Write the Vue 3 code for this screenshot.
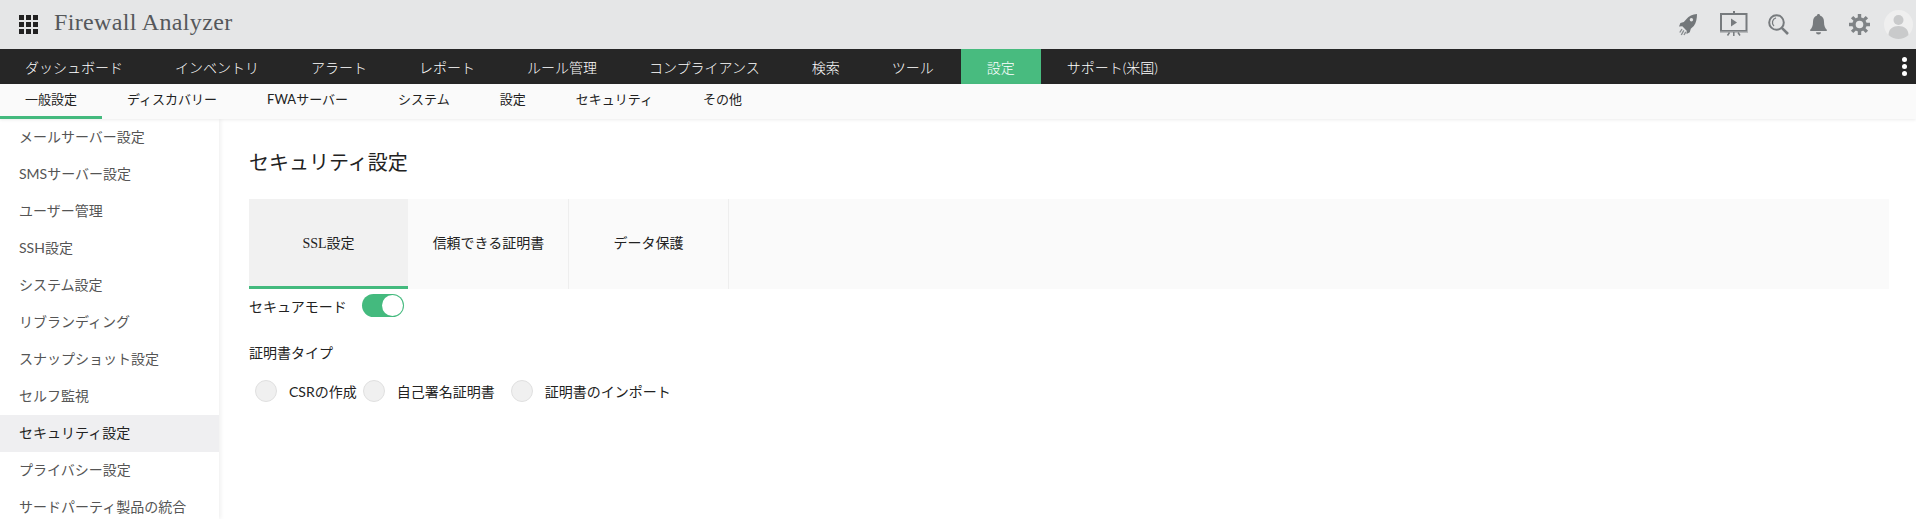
<script setup>
const navItems = ['ダッシュボード', 'インベントリ', 'アラート', 'レポート', 'ルール管理', 'コンプライアンス', '検索', 'ツール', '設定', 'サポート(米国)']
const subItems = ['一般設定', 'ディスカバリー', 'FWAサーバー', 'システム', '設定', 'セキュリティ', 'その他']
const sideItems = ['メールサーバー設定', 'SMSサーバー設定', 'ユーザー管理', 'SSH設定', 'システム設定', 'リブランディング', 'スナップショット設定', 'セルフ監視', 'セキュリティ設定', 'プライバシー設定', 'サードパーティ製品の統合']
const tabs = ['SSL設定', '信頼できる証明書', 'データ保護']
const radios = ['CSRの作成', '自己署名証明書', '証明書のインポート']
</script>

<template>
  <div class="page">
    <header class="top">
      <div class="grid-icon"><i v-for="n in 9" :key="n"></i></div>
      <div class="brand">Firewall Analyzer</div>
      <div class="tools">
        <svg class="ic-rocket" width="18" height="22" viewBox="0 0 18 22">
          <path d="M18 0c-4.500.4-8.200 2-10.500 5L4.800 8 1.400 9 0 12.500l3.300-.2 4.400 4.400-.2 3.300 3.300-1.800 1-3.400 3-2.800C17.200 9 18 4.500 18 0z" fill="#73777a"/>
          <circle cx="12.400" cy="5.800" r="1.700" fill="#e5e6e7"/>
          <path d="M3 15 .8 18.500M4.800 16.300 2.300 21M6.800 17.800 5 21" stroke="#8b8f92" stroke-width="1.400" fill="none"/>
        </svg>
        <svg class="ic-board" width="28" height="25" viewBox="0 0 28 25">
          <path d="M14 0v3" stroke="#777b7e" stroke-width="2"/>
          <rect x="1" y="3" width="25.500" height="17" fill="none" stroke="#777b7e" stroke-width="2"/>
          <path d="M11 7.500v8l6-4z" fill="#777b7e"/>
          <path d="M0 20.500h28v1.500H0z" fill="#b9bbbd"/>
          <path d="M7.500 24.500 9.500 21.500M20 24.500l-2-3M13.800 21v4" stroke="#777b7e" stroke-width="1.500"/>
        </svg>
        <svg class="ic-search" width="21" height="21" viewBox="0 0 21 21">
          <circle cx="8.500" cy="8.500" r="7.300" fill="none" stroke="#777b7e" stroke-width="2"/>
          <path d="M8 3.800a4.800 4.800 0 0 0-2 8.200" fill="none" stroke="#777b7e" stroke-width="1.300"/>
          <path d="M13.800 13.800 20 20" stroke="#777b7e" stroke-width="2.600"/>
        </svg>
        <svg class="ic-bell" width="17" height="21" viewBox="0 0 17 21">
          <path d="M8.500 0c1 0 1.500.7 1.500 1.600C13 2.400 14 5 14 8c0 4 1.200 6 2.800 7.800V17H.2v-1.200C1.800 14 3 12 3 8c0-3 1-5.600 4-6.400C7 .7 7.500 0 8.500 0z" fill="#777b7e"/>
          <path d="M6 18.300h5a2.500 2.200 0 0 1-5 0z" fill="#777b7e"/>
        </svg>
        <svg class="ic-gear" width="21" height="21" viewBox="0 0 21 21">
          <circle cx="10.500" cy="10.500" r="5.500" fill="none" stroke="#7f8386" stroke-width="3.400"/>
          <g stroke="#7f8386" stroke-width="3.400">
            <path d="M10.500 0v4M10.500 17v4M0 10.500h4M17 10.500h4M3.100 3.100l2.800 2.800M15.100 15.100l2.800 2.800M3.100 17.900l2.800-2.800M15.100 5.900l2.800-2.800"/>
          </g>
        </svg>
        <svg class="ic-avatar" width="29" height="29" viewBox="0 0 29 29">
          <circle cx="14.500" cy="14.500" r="14.500" fill="#efefef"/>
          <circle cx="14.500" cy="10" r="5" fill="#c9cacb"/>
          <path d="M4.500 25c0-6 4.500-9 10-9s10 3 10 9a14.500 14.500 0 0 1-20 0z" fill="#c9cacb"/>
        </svg>
      </div>
    </header>

    <nav class="nav">
      <a v-for="item in navItems" :key="item" class="nav-item" :class="{ active: item === '設定' }">{{ item }}</a>
      <div class="dots"><i></i><i></i><i></i></div>
    </nav>

    <nav class="subnav">
      <a v-for="(item, i) in subItems" :key="item" class="sub-item" :class="{ active: i === 0 }">{{ item }}</a>
    </nav>

    <div class="body">
      <aside class="side">
        <a v-for="item in sideItems" :key="item" class="side-item" :class="{ active: item === 'セキュリティ設定' }">{{ item }}</a>
      </aside>

      <main class="main">
        <h1 class="title">セキュリティ設定</h1>
        <div class="tabs">
          <div v-for="(t, i) in tabs" :key="t" class="tab" :class="{ active: i === 0 }">{{ t }}</div>
        </div>
        <div class="secure">
          <span>セキュアモード</span>
          <span class="toggle"><i></i></span>
        </div>
        <div class="cert-label">証明書タイプ</div>
        <div class="radios">
          <label v-for="r in radios" :key="r" class="radio"><i></i><span>{{ r }}</span></label>
        </div>
      </main>
    </div>
  </div>
</template>

<style>
html, body { margin: 0; overflow: hidden; background: #fff; }
</style>

<style scoped>
.page {
  width: 1916px;
  height: 519px;
  overflow: hidden;
  display: flex;
  flex-direction: column;
  font-family: Lato, "Noto Sans CJK JP", sans-serif;
  font-size: 14px;
  color: #222;
}
.top {
  height: 49px;
  flex: none;
  display: flex;
  align-items: center;
  padding-left: 19px;
  background: #e5e6e7;
}
.grid-icon {
  width: 19px;
  height: 19px;
  display: grid;
  grid-template-columns: repeat(3, 5px);
  grid-template-rows: repeat(3, 5px);
  gap: 2px;
}
.grid-icon i { background: #222; }
.brand {
  margin-left: 16px;
  font-family: "Liberation Serif", serif;
  font-size: 24px;
  letter-spacing: 0.35px;
  color: #55585b;
  position: relative;
  top: -2px;
}
.tools {
  margin-left: auto;
  display: flex;
  align-items: center;
  padding-right: 3px;
}
.tools svg { display: block; flex: none; }
.ic-rocket { margin-right: 23px; }
.ic-board { margin-right: 20px; margin-top: -2px; }
.ic-search { margin-right: 21px; }
.ic-bell { margin-right: 22px; }
.ic-gear { margin-right: 14px; }
.nav {
  height: 35px;
  flex: none;
  display: flex;
  align-items: stretch;
  background: #262626;
}
.nav-item {
  display: flex;
  align-items: center;
  padding: 0 26px;
  color: #fff;
  font-size: 14px;
  font-weight: 300;
  white-space: nowrap;
}
.nav-item:first-child { padding-left: 25px; }
.nav-item:nth-child(8) { padding-right: 27px; }
.nav-item.active { background: #48bb7f; }
.dots {
  margin-left: auto;
  padding-right: 9px;
  display: flex;
  flex-direction: column;
  justify-content: center;
  gap: 2px;
}
.dots i { width: 5px; height: 5px; border-radius: 50%; background: #fff; }
.subnav {
  height: 35px;
  flex: none;
  display: flex;
  align-items: stretch;
  background: #fafafa;
  box-shadow: 0 1px 3px rgba(0, 0, 0, 0.08);
  position: relative;
  z-index: 2;
}
.sub-item {
  display: flex;
  align-items: center;
  padding: 0 25px 3px;
  border-bottom: 3px solid transparent;
  box-sizing: border-box;
  font-size: 13px;
  font-weight: 400;
  color: #222;
  white-space: nowrap;
}
.sub-item.active { border-bottom-color: #44ba7e; }
.body { flex: 1; display: flex; min-height: 0; }
.side {
  width: 219px;
  flex: none;
  box-shadow: 2px 0 4px rgba(0, 0, 0, 0.06);
  position: relative;
  z-index: 1;
}
.side-item {
  display: flex;
  align-items: center;
  height: 37px;
  padding-left: 19px;
  padding-bottom: 3px;
  box-sizing: border-box;
  color: #555;
  font-size: 14px;
  font-weight: 400;
  white-space: nowrap;
}
.side-item.active { background: #efeff1; color: #222; }
.main { flex: 1; padding: 0 27px 0 30px; min-width: 0; }
.title {
  margin: 0;
  height: 80px;
  display: flex;
  align-items: center;
  font-size: 20px;
  font-weight: 400;
  color: #222;
  line-height: 1;
  padding-top: 6px;
  box-sizing: border-box;
}
.tabs { display: flex; height: 90px; background: #fafafa; }
.tab {
  width: 160px;
  box-sizing: border-box;
  display: flex;
  align-items: center;
  justify-content: center;
  padding-bottom: 4px;
  border-right: 1px solid #eeeeee;
  font-size: 14px;
  color: #222;
}
.tab:first-child { font-family: "Liberation Serif", "Noto Sans CJK JP", serif; }
.tab.active {
  background: #f1f1f1;
  box-shadow: inset 0 -3px 0 #44ba7e;
  border-right-color: #fafafa;
}
.secure {
  display: flex;
  align-items: center;
  height: 34px;
  padding-bottom: 3px;
  box-sizing: border-box;
  margin-top: 1px;
}
.toggle {
  margin-left: 15px;
  width: 42px;
  height: 23px;
  border-radius: 12px;
  background: #44ba7e;
  position: relative;
  flex: none;
}
.toggle i {
  position: absolute;
  right: 1px;
  top: 1px;
  width: 21px;
  height: 21px;
  border-radius: 50%;
  background: #fff;
}
.cert-label { margin-top: 17px; line-height: 24px; }
.radios { display: flex; margin-top: 14px; padding-left: 6px; }
.radio { display: flex; align-items: center; height: 24px; margin-right: 6px; }
.radio i {
  width: 22px;
  height: 22px;
  box-sizing: border-box;
  border-radius: 50%;
  background: #f0f0f0;
  border: 1px solid #e0e0e0;
  margin-right: 12px;
}
.radio + .radio { margin-right: 16px; }
</style>
